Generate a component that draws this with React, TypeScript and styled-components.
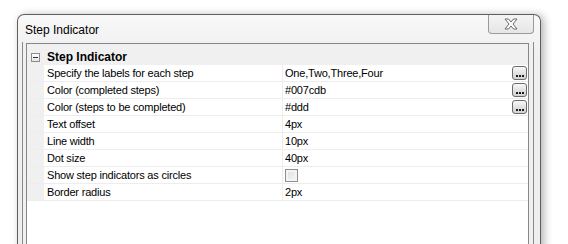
import styled, { createGlobalStyle } from "styled-components";

type Prop = { label: string; value: string; button?: boolean; checkbox?: boolean };

const properties: Prop[] = [
    { label: "Specify the labels for each step", value: "One,Two,Three,Four", button: true },
    { label: "Color (completed steps)", value: "#007cdb", button: true },
    { label: "Color (steps to be completed)", value: "#ddd", button: true },
    { label: "Text offset", value: "4px" },
    { label: "Line width", value: "10px" },
    { label: "Dot size", value: "40px" },
    { label: "Show step indicators as circles", value: "", checkbox: true },
    { label: "Border radius", value: "2px" },
];

export default function App() {
    return (
        <>
            <GlobalStyle />
            <Page>
                <Window>
                    <TitleBar>
                        <Title>Step Indicator</Title>
                        <CloseButton aria-label="Close">
                            <svg width="16" height="12" viewBox="0 0 16 12">
                                <path
                                    d="M2 1 H5.5 L8 4 L10.5 1 H14 L10 6 L14 11 H10.5 L8 8 L5.5 11 H2 L6 6 Z"
                                    fill="#fdfdfd"
                                    stroke="#6a6a6a"
                                    strokeWidth="1"
                                    strokeLinejoin="round"
                                />
                            </svg>
                        </CloseButton>
                    </TitleBar>
                    <Client>
                        <Grid>
                            <CategoryRow>
                                <Gutter>
                                    <Collapse>
                                        <span />
                                    </Collapse>
                                </Gutter>
                                <CategoryName>Step Indicator</CategoryName>
                            </CategoryRow>
                            {properties.map(p => (
                                <Row key={p.label}>
                                    <Gutter />
                                    <LabelCell>{p.label}</LabelCell>
                                    <ValueCell>
                                        {p.checkbox ? <CheckBox /> : <span>{p.value}</span>}
                                        {p.button && (
                                            <Ellipsis aria-label="...">
                                                <Dot />
                                                <Dot />
                                                <Dot />
                                            </Ellipsis>
                                        )}
                                    </ValueCell>
                                </Row>
                            ))}
                        </Grid>
                    </Client>
                </Window>
            </Page>
        </>
    );
}

const GlobalStyle = createGlobalStyle`
    html, body {
        margin: 0;
        padding: 0;
        background: #ffffff;
        overflow: hidden;
    }
    body {
        font-family: "Liberation Sans", Arial, sans-serif;
        font-size: 11px;
        color: #000;
    }
`;

const Page = styled.div`
    width: 568px;
    height: 244px;
    padding: 14px 0 0 17px;
    box-sizing: border-box;
`;

const Window = styled.div`
    width: 524px;
    height: 250px;
    box-sizing: border-box;
    border: 1px solid #5e5e5e;
    border-bottom: none;
    border-radius: 7px 7px 0 0;
    background: linear-gradient(#f8f8f8, #efefef 40px, #eeeeee);
    box-shadow: 3px 1px 8px rgba(0, 0, 0, 0.3);
    display: flex;
    flex-direction: column;
`;

const TitleBar = styled.div`
    height: 27px;
    display: flex;
    justify-content: space-between;
    align-items: flex-start;
    padding: 0 6px 0 7px;
`;

const Title = styled.span`
    font-family: "Liberation Sans", Arial, sans-serif;
    font-size: 12px;
    line-height: 14px;
    margin-top: 8px;
`;

const CloseButton = styled.div`
    width: 46px;
    height: 19px;
    box-sizing: border-box;
    border: 1px solid #9a9a9a;
    border-top: none;
    border-radius: 0 0 4px 4px;
    background: linear-gradient(#f4f4f4, #e6e6e6);
    display: flex;
    align-items: center;
    justify-content: center;
`;

const Client = styled.div`
    flex: 1;
    margin: 0 6px 0 4px;
    border-left: 1px solid #8a8a8a;
    border-right: 1px solid #8a8a8a;
    background: #f0f0f0;
    padding: 1px 4px 0 3px;
    display: flex;
`;

const Grid = styled.div`
    flex: 1;
    border: 1px solid #828790;
    background: #ffffff;
    display: flex;
    flex-direction: column;
    letter-spacing: -0.2px;
`;

const CategoryRow = styled.div`
    height: 21px;
    display: flex;
    align-items: flex-end;
    background: #f0f0f0;
`;

const Gutter = styled.div`
    width: 17px;
    align-self: stretch;
    background: #f0f0f0;
    display: flex;
    align-items: flex-end;
    padding-bottom: 3px;
    box-sizing: border-box;
`;

const Collapse = styled.div`
    width: 9px;
    height: 9px;
    box-sizing: border-box;
    margin-left: 4px;
    border: 1px solid #8c8c8c;
    background: linear-gradient(#ffffff, #e4e4e4);
    display: flex;
    align-items: center;
    justify-content: center;

    span {
        width: 5px;
        height: 1px;
        background: #333;
    }
`;

const CategoryName = styled.span`
    font-weight: bold;
    font-size: 12px;
    letter-spacing: 0;
    line-height: 14px;
    padding: 0 0 1px 3px;
`;

const Row = styled.div`
    height: 17px;
    box-sizing: border-box;
    border-bottom: 1px solid #ededed;
    display: grid;
    grid-template-columns: 17px 239px 1fr;
`;

const LabelCell = styled.div`
    padding-left: 3px;
    line-height: 16px;
    border-right: 1px solid #ededed;
    white-space: nowrap;
`;

const ValueCell = styled.div`
    padding: 0 1px 0 2px;
    line-height: 16px;
    display: flex;
    align-items: center;
    justify-content: space-between;
`;

const Ellipsis = styled.div`
    width: 15px;
    height: 14px;
    box-sizing: border-box;
    border: 1px solid #6c6c6c;
    border-radius: 3px;
    background: linear-gradient(#f8f8f8, #e2e2e2 50%, #d2d2d2);
    display: flex;
    align-items: flex-end;
    justify-content: center;
    gap: 1px;
    padding-bottom: 2px;
`;

const Dot = styled.span`
    width: 2px;
    height: 2px;
    background: #1a1a1a;
`;

const CheckBox = styled.div`
    width: 13px;
    height: 13px;
    box-sizing: border-box;
    border: 1px solid #8e8f8f;
    background: linear-gradient(135deg, #dcdcdc, #f8f8f8);
    box-shadow: inset 0 0 0 2px #f4f4f4;
`;
